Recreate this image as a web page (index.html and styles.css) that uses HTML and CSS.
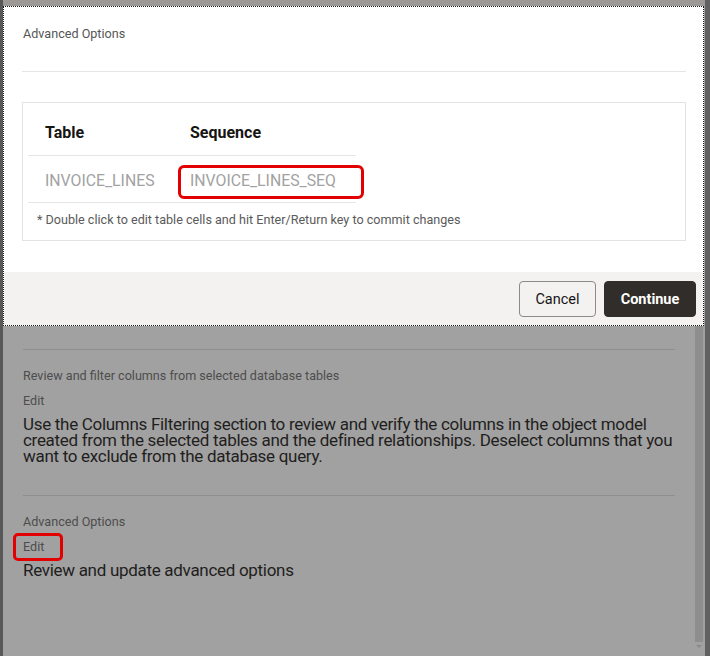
FILE: index.html
```html
<!DOCTYPE html>
<html lang="en">
<head>
<meta charset="utf-8">
<title>Advanced Options</title>
<link rel="stylesheet" href="styles.css">
</head>
<body>
<div class="screen">
  <div class="edge-left"></div>
  <div class="main">
    <div class="topbar"></div>
    <div class="content">
      <section class="step">
        <div class="step-label">Review and filter columns from selected database tables</div>
        <div class="step-edit"><span class="edit-link">Edit</span></div>
        <p class="step-desc">Use the Columns Filtering section to review and verify the columns in the object model created from the selected tables and the defined relationships. Deselect columns that you want to exclude from the database query.</p>
      </section>
      <section class="step">
        <div class="step-label">Advanced Options</div>
        <div class="step-edit"><span class="edit-link highlighted">Edit</span></div>
        <p class="step-desc">Review and update advanced options</p>
      </section>
    </div>
  </div>
  <div class="scroll">
    <div class="scroll-track"></div>
    <div class="scroll-arrow"></div>
  </div>
  <div class="scroll-gap"></div>
  <div class="edge-right"></div>

  <div class="dialog" role="dialog" aria-label="Advanced Options">
    <div class="dialog-body">
      <div class="dialog-title">Advanced Options</div>
      <div class="dialog-rule"></div>
      <div class="table-box">
        <table class="seq-table">
          <thead>
            <tr><th class="col-table">Table</th><th class="col-seq">Sequence</th></tr>
          </thead>
          <tbody>
            <tr><td class="col-table">INVOICE_LINES</td><td class="col-seq highlighted-cell">INVOICE_LINES_SEQ</td></tr>
          </tbody>
        </table>
        <div class="table-note">* Double click to edit table cells and hit Enter/Return key to commit changes</div>
      </div>
    </div>
    <div class="dialog-footer">
      <button class="btn btn-cancel">Cancel</button>
      <button class="btn btn-continue">Continue</button>
    </div>
  </div>
</div>
</body>
</html>
```
FILE: styles.css
```css
*, *::before, *::after { box-sizing: border-box; }
html, body { margin: 0; padding: 0; }
body {
  width: 710px;
  height: 656px;
  overflow: hidden;
  font-family: Roboto, "Noto Sans", sans-serif;
  background: #a1a1a1;
}
.screen {
  position: relative;
  display: flex;
  width: 710px;
  height: 656px;
  background: #a1a1a1;
}
.edge-left {
  width: 3px;
  background: #585858;
}
.main {
  flex: 1;
  display: flex;
  flex-direction: column;
}
.topbar {
  height: 6px;
  background: #9d9997;
}
.content {
  padding: 343px 20px 0 20px;
}
.step {
  border-top: 1px solid #8f8f8f;
  padding: 18px 0 31px 0;
}
.step-label {
  font-size: 12.6px;
  line-height: 16px;
  color: #4d4d4d;
}
.step-edit {
  margin-top: 9px;
  font-size: 12.6px;
  line-height: 16px;
  color: #4d4d4d;
}
.edit-link {
  position: relative;
  display: inline-block;
}
.edit-link.highlighted::after {
  content: "";
  position: absolute;
  left: -10px;
  top: -6px;
  width: 50px;
  height: 28px;
  border: 3px solid #e20000;
  border-radius: 5px;
}
.step-desc {
  margin: 7px 0 0 0;
  font-size: 17px;
  line-height: 16px;
  letter-spacing: -0.3px;
  color: #1f1e1d;
}
.scroll {
  width: 8px;
  border-top: 6px solid #9d9997;
  display: flex;
  flex-direction: column;
  align-items: center;
}
.scroll-track {
  margin-top: 320px;
  width: 8px;
  height: 316px;
  background: #8e8e8e;
}
.scroll-arrow {
  margin-top: 3px;
  width: 0;
  height: 0;
  border-left: 3px solid transparent;
  border-right: 3px solid transparent;
  border-top: 3px solid #8a8a8a;
}
.scroll-gap {
  width: 2px;
  border-top: 6px solid #9d9997;
}
.edge-right {
  width: 5px;
  background: #616161;
}

/* dialog */
.dialog {
  position: absolute;
  top: 6px;
  left: 3px;
  width: 701px;
  height: 320px;
  border: 1px dotted #1a1a1a;
  background: #fff;
  display: flex;
  flex-direction: column;
}
.dialog-body {
  flex: 1;
  padding: 19px 17px 0 18px;
}
.dialog-title {
  margin-left: 1px;
  font-size: 12.6px;
  line-height: 16px;
  color: #555;
}
.dialog-rule {
  margin-top: 29px;
  height: 1px;
  background: #e6e6e6;
}
.table-box {
  margin-top: 30px;
  border: 1px solid #e3e3e3;
  padding: 5px 5px 12px 5px;
}
.seq-table {
  border-collapse: collapse;
  table-layout: fixed;
  width: 328px;
}
.seq-table th,
.seq-table td {
  text-align: left;
  padding: 3px 0 0 17px;
  height: 47px;
  border-bottom: 1px solid #e6e6e6;
  white-space: nowrap;
}
.seq-table .col-table { width: 145px; }
.seq-table .col-seq { width: 183px; }
.seq-table th {
  font-size: 16px;
  font-weight: 700;
  color: #161513;
}
.seq-table td {
  font-size: 15.8px;
  font-weight: 400;
  color: #a2a2a2;
}
.highlighted-cell {
  position: relative;
}
.highlighted-cell::after {
  content: "";
  position: absolute;
  left: 5px;
  top: 9px;
  width: 186px;
  height: 34px;
  border: 3px solid #e20000;
  border-radius: 6px;
}
.table-note {
  margin-top: 9px;
  padding-left: 9px;
  font-size: 12.6px;
  line-height: 16px;
  color: #5a5a5a;
}
.dialog-footer {
  height: 53px;
  background: #f3f2f1;
  display: flex;
  justify-content: flex-end;
  align-items: flex-start;
  gap: 8px;
  padding: 9px 7px 0 0;
}
.btn {
  height: 36px;
  border-radius: 4px;
  font-family: Roboto, "Noto Sans", sans-serif;
  font-size: 14.5px;
  padding: 0;
  cursor: pointer;
}
.btn-cancel {
  width: 77px;
  background: #f3f2f1;
  border: 1px solid #8c8a88;
  color: #161513;
}
.btn-continue {
  width: 92px;
  background: #312d2a;
  border: 1px solid #312d2a;
  color: #fff;
  font-weight: 700;
}
```
